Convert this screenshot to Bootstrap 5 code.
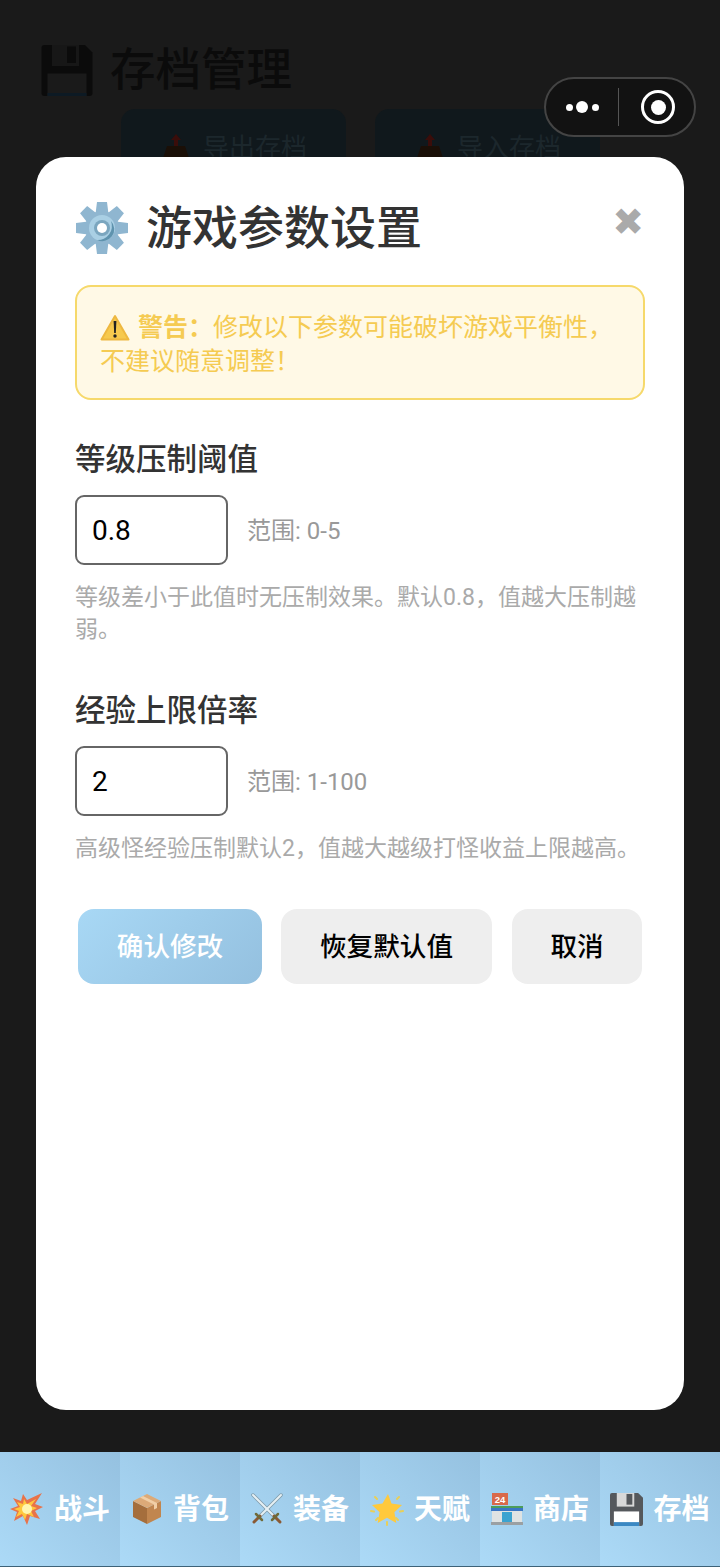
<!DOCTYPE html>
<html lang="zh">

<head>
    <meta charset="utf-8">
    <title>游戏参数设置</title>
    <link href="https://cdn.jsdelivr.net/npm/bootstrap@5.3.2/dist/css/bootstrap.min.css" rel="stylesheet">
    <style>
        html,
        body {
            height: 1567px;
            overflow: hidden;
        }

        body {
            background: #1a1a1a;
            font-family: Roboto, "Noto Sans CJK SC", sans-serif;
            position: relative;
        }

        .game-area {
            height: 1452px;
            padding: 45px 0 0 41px;
        }

        .under-title {
            font-size: 45.500px;
            line-height: 51px;
            font-weight: 500;
            color: #0b0b0b;
            gap: 17px;
        }

        .under-actions {
            margin: 13px 0 0 80px;
            gap: 29px;
        }

        .under-btn {
            width: 225px;
            height: 90px;
            border-radius: 14px;
            background: #10181c;
            color: #1c272c;
            font-size: 26px;
            padding-top: 24px;
            gap: 11px;
        }

        .under-btn span {
            margin-top: -4px;
        }

        .capsule {
            position: absolute;
            left: 544px;
            top: 77px;
            width: 152px;
            height: 60px;
            border-radius: 30px;
            background: #121212;
            border: 2px solid #444;
        }

        .capsule-dots {
            width: 72px;
            gap: 3.500px;
        }

        .capsule-dots i {
            width: 7px;
            height: 7px;
            border-radius: 50%;
            background: #fff;
        }

        .capsule-dots i.mid {
            width: 12px;
            height: 12px;
        }

        .capsule-line {
            width: 1px;
            height: 38px;
            background: #555;
        }

        .capsule-target {
            width: 34px;
            height: 34px;
            margin-left: 22px;
            border-radius: 50%;
            border: 3px solid #fff;
        }

        .capsule-target i {
            width: 15px;
            height: 15px;
            border-radius: 50%;
            background: #fff;
        }

        .settings-panel {
            position: absolute;
            left: 36px;
            top: 157px;
            width: 648px;
            height: 1253px;
            background: #fff;
            border-radius: 30px;
            padding: 38px 39px;
        }

        .panel-head {
            height: 62px;
        }

        .panel-title {
            font-size: 46px;
            font-weight: 500;
            line-height: 62px;
            color: #333;
            margin: 0;
            gap: 17px;
        }

        .panel-title span {
            padding-top: 4px;
        }

        .panel-title svg {
            margin-top: 3px;
        }

        .panel-close {
            font-family: "DejaVu Sans", sans-serif;
            font-size: 38px;
            font-weight: 700;
            line-height: 1;
            color: #aaa;
            margin-right: 1px;
            margin-top: -8px;
        }

        .warn-box {
            margin: 28px 0 0;
            height: 115px;
            padding: 24px 23px 0;
            background: #fff9e6;
            border: 2px solid #f6d96b;
            border-radius: 16px;
            color: #f5cb52;
            font-size: 25px;
            line-height: 34px;
        }

        .warn-box svg {
            vertical-align: -5px;
            margin-right: 8px;
        }

        .warn-box b {
            font-weight: 700;
        }

        .param-block {
            margin-top: 35px;
        }

        .param-block+.param-block {
            margin-top: 40px;
        }

        .param-label {
            font-size: 30.500px;
            line-height: 50px;
            font-weight: 500;
            color: #333;
            margin-bottom: 10px;
            display: block;
        }

        .param-row {
            gap: 19px;
        }

        .param-input.form-control {
            width: 153px;
            height: 70px;
            border: 2px solid #666;
            border-radius: 9px;
            color: #000;
            font-family: Roboto, sans-serif;
            font-size: 28px;
            padding: 0 15px;
            box-shadow: none;
        }

        .param-range {
            font-size: 24px;
            color: #999;
            padding-top: 2px;
        }

        .param-help {
            margin: 17px 0 0;
            font-size: 23px;
            line-height: 32px;
            color: #aaa;
        }

        .panel-actions {
            margin: 44px 3px 0;
            gap: 19px;
        }

        .panel-btn.btn {
            height: 75px;
            border: 0;
            border-radius: 16px;
            font-size: 26.600px;
            font-weight: 500;
            padding: 0;
            color: #000;
            background: #eee;
        }

        .panel-btn.btn-ok {
            width: 184px;
            color: #fff;
            background: linear-gradient(135deg, #a8d8f5, #94c0df);
        }

        .panel-btn.btn-reset {
            width: 211px;
        }

        .panel-btn.btn-cancel {
            width: 130px;
            margin-left: 1px;
        }

        .bottom-tabs {
            height: 115px;
            border-bottom: 1px solid #3d6278;
        }

        .tab-item {
            width: 120px;
            background: linear-gradient(45deg, #acdaf7, #95c1e0);
            color: #fff;
            font-size: 28px;
            font-weight: 700;
            line-height: 1;
            gap: 10px;
        }

        .tab-item span {
            padding-top: 2px;
        }

        .tab-item svg {
            flex: none;
        }
    </style>
</head>

<body>
    <svg width="0" height="0" class="position-absolute">
        <symbol id="floppy" viewBox="0 0 34 34">
            <path fill="#55585c" d="M2 0h27l5 5v27a2 2 0 0 1-2 2H2a2 2 0 0 1-2-2V2a2 2 0 0 1 2-2z" />
            <rect x="7" y="0" width="18" height="14" fill="#d8d8d8" />
            <rect x="17" y="1" width="6" height="11" fill="#55585c" />
            <rect x="4" y="19" width="26" height="15" fill="#fff" />
            <rect x="4" y="30" width="26" height="4" fill="#3b88c3" />
        </symbol>
    </svg>

    <div class="game-area">
        <div class="under-title d-flex align-items-start">
            <svg width="52" height="51" viewBox="0 0 34 34" fill="#0b0b0b">
                <path d="M2 0h27l5 5v27a2 2 0 0 1-2 2H2a2 2 0 0 1-2-2V2a2 2 0 0 1 2-2z" />
                <rect x="7" y="0" width="18" height="14" fill="#171717" />
                <rect x="17" y="1" width="6" height="11" fill="#0b0b0b" />
                <rect x="4" y="19" width="26" height="15" fill="#1a1a1a" />
                <rect x="4" y="32" width="26" height="2" fill="#0d1a24" />
            </svg>
            <span>存档管理</span>
        </div>
        <div class="under-actions d-flex">
            <div class="under-btn d-flex justify-content-center align-items-start">
                <svg width="32" height="32" viewBox="0 0 32 32">
                    <path fill="#3a0d0a" d="M16 1l5 6h-3v6h-4V7h-3z" />
                    <path fill="#1a0f07" d="M7 13h18l6 18H1z" />
                </svg>
                <span>导出存档</span>
            </div>
            <div class="under-btn d-flex justify-content-center align-items-start">
                <svg width="32" height="32" viewBox="0 0 32 32">
                    <path fill="#3a0d0a" d="M16 1l5 6h-3v6h-4V7h-3z" />
                    <path fill="#1a0f07" d="M7 13h18l6 18H1z" />
                </svg>
                <span>导入存档</span>
            </div>
        </div>
    </div>

    <div class="capsule d-flex align-items-center">
        <div class="capsule-dots d-flex justify-content-center align-items-center">
            <i></i><i class="mid"></i><i></i>
        </div>
        <div class="capsule-line"></div>
        <div class="capsule-target d-flex justify-content-center align-items-center"><i></i></div>
    </div>

    <div class="settings-panel">
        <div class="panel-head d-flex justify-content-between align-items-center">
            <h1 class="panel-title d-flex align-items-center">
                <svg width="54" height="54" viewBox="0 0 54 54">
                    <g fill="#8fb6d0">
                        <path d="M22 1h10l1.500 12h-13z" />
                        <path d="M22 1h10l1.500 12h-13z" transform="rotate(45 27 27)" />
                        <path d="M22 1h10l1.500 12h-13z" transform="rotate(90 27 27)" />
                        <path d="M22 1h10l1.500 12h-13z" transform="rotate(135 27 27)" />
                        <path d="M22 1h10l1.500 12h-13z" transform="rotate(180 27 27)" />
                        <path d="M22 1h10l1.500 12h-13z" transform="rotate(225 27 27)" />
                        <path d="M22 1h10l1.500 12h-13z" transform="rotate(270 27 27)" />
                        <path d="M22 1h10l1.500 12h-13z" transform="rotate(315 27 27)" />
                        <circle cx="27" cy="27" r="17" />
                    </g>
                    <circle cx="27" cy="27" r="13" fill="#a9cfe4" />
                    <path d="M36 20a12 12 0 0 1-14 19 14 14 0 0 0 14-19z" fill="#5f93ae" />
                    <circle cx="27" cy="27" r="8" fill="#7ba6bf" />
                    <circle cx="27" cy="27" r="5" fill="#fff" />
                </svg>
                <span>游戏参数设置</span>
            </h1>
            <span class="panel-close">✖</span>
        </div>

        <div class="warn-box">
            <svg width="30" height="27" viewBox="0 0 30 27">
                <path fill="#f6c94e" stroke="#eeb840" stroke-width="2" stroke-linejoin="round" d="M15 2L1.500 25.500h27z" />
                <path fill="#222" d="M13.600 7h2.800l-.6 12h-1.600z" />
                <circle cx="15" cy="22" r="1.700" fill="#222" />
            </svg><b>警告&#xFF1A;</b>修改以下参数可能破坏游戏平衡性&#xFF0C;<br>不建议随意调整&#xFF01;
        </div>

        <div class="param-block">
            <label class="param-label" for="levelGap">等级压制阈值</label>
            <div class="param-row d-flex align-items-center">
                <input id="levelGap" class="param-input form-control" type="text" value="0.8">
                <span class="param-range">范围: 0-5</span>
            </div>
            <p class="param-help">等级差小于此值时无压制效果。默认0.8&#xFF0C;值越大压制越弱。</p>
        </div>

        <div class="param-block">
            <label class="param-label" for="expCap">经验上限倍率</label>
            <div class="param-row d-flex align-items-center">
                <input id="expCap" class="param-input form-control" type="text" value="2">
                <span class="param-range">范围: 1-100</span>
            </div>
            <p class="param-help">高级怪经验压制默认2&#xFF0C;值越大越级打怪收益上限越高。</p>
        </div>

        <div class="panel-actions d-flex">
            <button class="panel-btn btn btn-ok" type="button">确认修改</button>
            <button class="panel-btn btn btn-reset" type="button">恢复默认值</button>
            <button class="panel-btn btn btn-cancel" type="button">取消</button>
        </div>
    </div>

    <nav class="bottom-tabs d-flex">
        <div class="tab-item d-flex justify-content-center align-items-center">
            <svg width="34" height="34" viewBox="0 0 34 34">
                <path fill="#e8734a" d="M32 1l-7 11 8 3-8 4 5 8-10-3-3 9-4-9-9 5 3-9-7-3 8-3-5-8 8 3 2-7 4 6z" />
                <path fill="#ffc83d" d="M26 7l-5 7 6 2-6 3 3 6-7-3-2 6-3-6-6 3 3-6-5-2 6-2-3-5 6 2 1-5 3 5z" />
                <circle cx="17" cy="17" r="5" fill="#fff6b0" />
            </svg>
            <span>战斗</span>
        </div>
        <div class="tab-item d-flex justify-content-center align-items-center">
            <svg width="32" height="32" viewBox="0 0 32 32">
                <path fill="#a56e3c" d="M2 8l14 7v16L2 24z" />
                <path fill="#c1864f" d="M30 8l-14 7v16l14-7z" />
                <path fill="#dcaa78" d="M16 1l14 7-14 7L2 8z" />
                <path fill="#f1cfa6" d="M9 4.500l14 7v5l3-1.500v-5L12 3z" />
            </svg>
            <span>背包</span>
        </div>
        <div class="tab-item d-flex justify-content-center align-items-center">
            <svg width="32" height="32" viewBox="0 0 32 32" fill="none" stroke-linecap="round">
                <path stroke="#7f9aa8" stroke-width="3.500" d="M30 2L9 23" />
                <path stroke="#7f9aa8" stroke-width="3.500" d="M2 2l21 21" />
                <path stroke="#e6f0f4" stroke-width="2" d="M30 2L9 23" />
                <path stroke="#e6f0f4" stroke-width="2" d="M2 2l21 21" />
                <path stroke="#8a5a35" stroke-width="3" d="M9 23l-6 6" />
                <path stroke="#8a5a35" stroke-width="3" d="M23 23l6 6" />
                <path stroke="#6f6a3a" stroke-width="2.500" d="M5 21l6 6" />
                <path stroke="#6f6a3a" stroke-width="2.500" d="M27 21l-6 6" />
            </svg>
            <span>装备</span>
        </div>
        <div class="tab-item d-flex justify-content-center align-items-center">
            <svg width="34" height="34" viewBox="0 0 34 34">
                <g stroke="#e8cf5a" stroke-width="2" stroke-linecap="round">
                    <path d="M1 19l3 .500M33 19l-3 .500M17 33v-3M5 5l2 2M29 5l-2 2M6 28l2-2M28 28l-2-2" />
                </g>
                <path fill="#ffc93c" d="M18 2l3.500 9.500 10.500 1.500-7.600 7.300L26.300 31 17 25.800 7.700 31l1.900-10.700L2 13l10.500-1.500z" />
            </svg>
            <span>天赋</span>
        </div>
        <div class="tab-item d-flex justify-content-center align-items-center">
            <svg width="32" height="32" viewBox="0 0 32 32">
                <rect x="1" y="0" width="16" height="12" fill="#d9694a" />
                <text x="9" y="9.500" font-family="Liberation Sans" font-size="9.500" font-weight="700" fill="#fff" text-anchor="middle">24</text>
                <rect x="0" y="13" width="32" height="2" fill="#4e9d5a" />
                <rect x="0" y="15" width="32" height="3" fill="#3a76c4" />
                <rect x="1" y="18" width="30" height="11" fill="#dfe3e3" />
                <rect x="11" y="19" width="10" height="10" fill="#3ba3d0" />
                <rect x="0" y="29" width="32" height="3" fill="#9aa0a3" />
            </svg>
            <span>商店</span>
        </div>
        <div class="tab-item d-flex justify-content-center align-items-center">
            <svg width="33" height="33">
                <use href="#floppy" />
            </svg>
            <span>存档</span>
        </div>
    </nav>
</body>

</html>
